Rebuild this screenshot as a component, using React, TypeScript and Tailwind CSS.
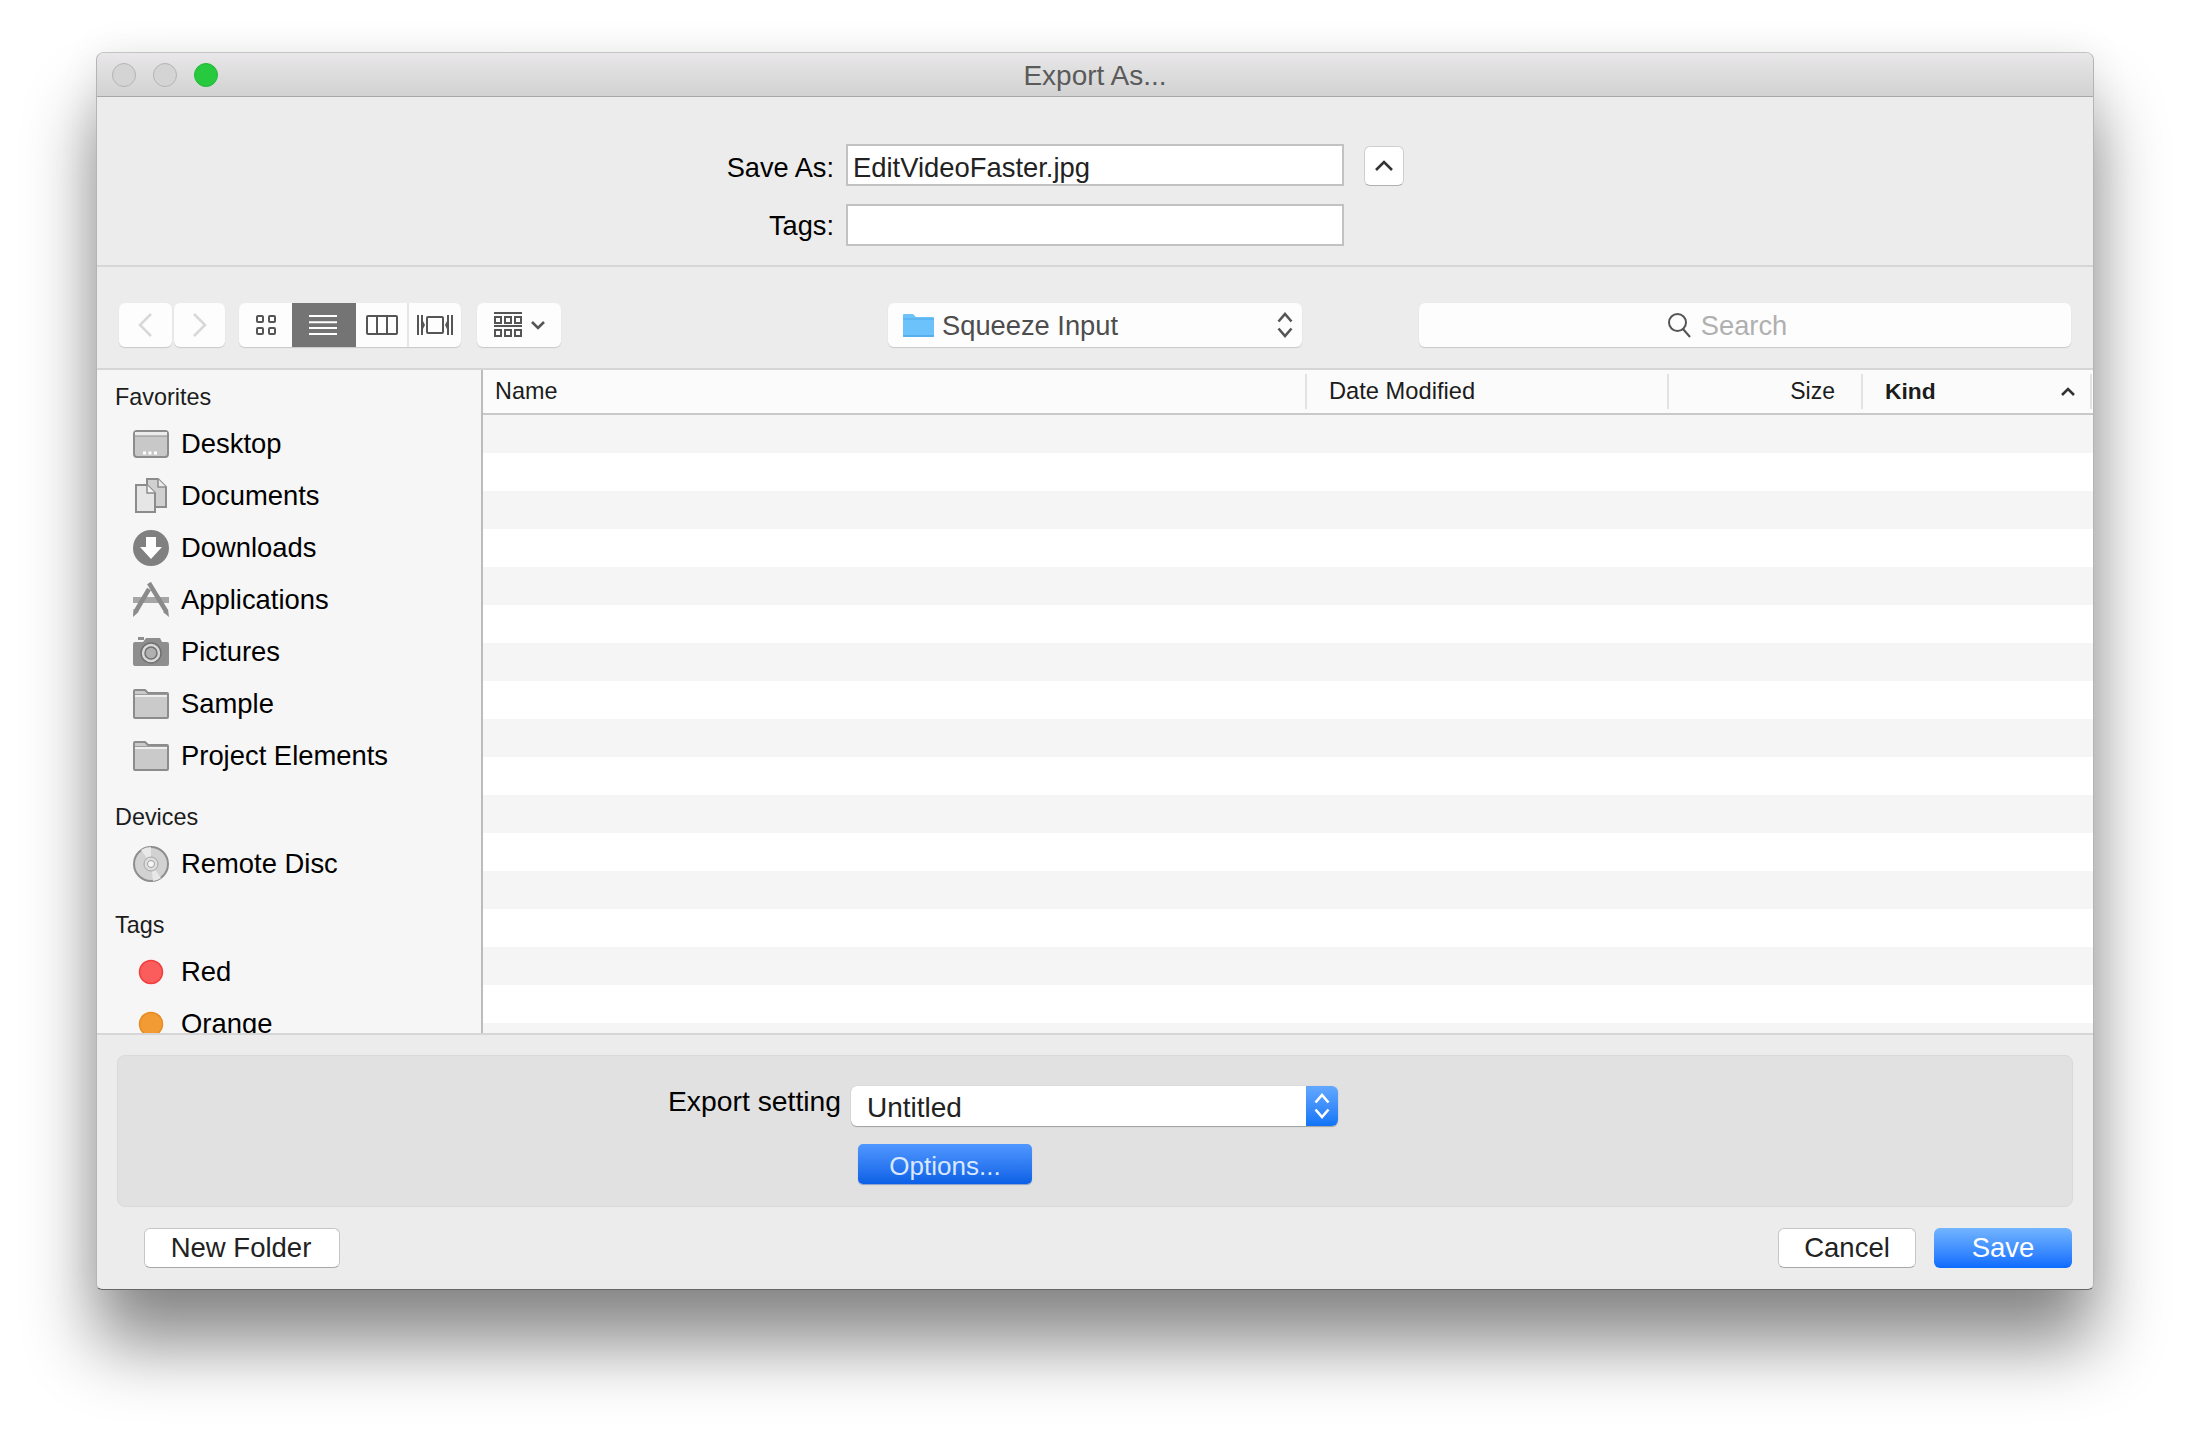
const FONT = 'font-["Liberation_Sans",Arial,sans-serif]';

function Desktop() {
  return (
    <svg width="36" height="36" viewBox="0 0 36 36">
      <rect x="1" y="5" width="34" height="26" rx="3" fill="#c8c8c8" stroke="#8c8c8c" strokeWidth="2" />
      <rect x="2" y="6" width="32" height="4" fill="#ececec" />
      <path d="M2 10h32" stroke="#8c8c8c" strokeWidth="1" />
      <path d="M10 27h3M15.500 27h3M21 27h3" stroke="#fff" strokeWidth="3" />
    </svg>
  );
}

function Documents() {
  return (
    <svg width="36" height="36" viewBox="0 0 36 36">
      <path d="M14 1h11l8 8v20H14z" fill="#d0d0d0" stroke="#8c8c8c" strokeWidth="2" />
      <path d="M25 1v8h8" fill="#ececec" stroke="#8c8c8c" strokeWidth="1.500" />
      <path d="M3 7h11l8 8v19H3z" fill="#e6e6e6" stroke="#8c8c8c" strokeWidth="2" />
      <path d="M14 7v8h8" fill="#f4f4f4" stroke="#8c8c8c" strokeWidth="1.500" />
    </svg>
  );
}

function Downloads() {
  return (
    <svg width="36" height="36" viewBox="0 0 36 36">
      <circle cx="18" cy="18" r="18" fill="#808080" />
      <path d="M13 7h10v10h6L18 29 7 17h6z" fill="#fff" />
    </svg>
  );
}

function Applications() {
  return (
    <svg width="36" height="36" viewBox="0 0 36 36">
      <path d="M0 15h36v6H0z" fill="#a6a6a6" />
      <path d="M16 7L3 29" stroke="#8a8a8a" strokeWidth="4.500" />
      <path d="M16 1l17 28" stroke="#8a8a8a" strokeWidth="4.500" />
      <path d="M0 35l0.500-8 5 3z" fill="#8a8a8a" />
      <path d="M36 35l-6-5 5-3z" fill="#8a8a8a" />
    </svg>
  );
}

function Camera() {
  return (
    <svg width="36" height="36" viewBox="0 0 36 36">
      <path d="M2 8h8l3-4h14l2 4h5a2 2 0 0 1 2 2v20a2 2 0 0 1-2 2H2a2 2 0 0 1-2-2V10a2 2 0 0 1 2-2z" fill="#8e8e8e" />
      <path d="M5 3h6v3H5z" fill="#8e8e8e" />
      <circle cx="18" cy="19" r="10" fill="#d8d8d8" stroke="#707070" strokeWidth="1.500" />
      <circle cx="18" cy="19" r="6" fill="#b0b0b0" stroke="#707070" strokeWidth="1.500" />
    </svg>
  );
}

function Folder() {
  return (
    <svg width="36" height="36" viewBox="0 0 36 36">
      <path d="M1 31V5a1 1 0 0 1 1-1h10l3 3h19a1 1 0 0 1 1 1v23a1 1 0 0 1-1 1H2a1 1 0 0 1-1-1z" fill="#cacaca" stroke="#8c8c8c" strokeWidth="2" />
      <path d="M2 10h32" stroke="#eeeeee" strokeWidth="2" />
      <path d="M2 8.500h32" stroke="#9c9c9c" strokeWidth="1" />
    </svg>
  );
}

function Disc() {
  return (
    <svg width="36" height="36" viewBox="0 0 36 36">
      <circle cx="18" cy="18" r="17" fill="#d2d2d2" stroke="#8e8e8e" strokeWidth="2" />
      <path d="M18 18L8 4a17 17 0 0 1 10-3z" fill="#e8e8e8" />
      <path d="M18 18l10 14a17 17 0 0 1-8 3z" fill="#e8e8e8" />
      <circle cx="18" cy="18" r="7" fill="#dedede" stroke="#a4a4a4" strokeWidth="1" />
      <circle cx="18" cy="18" r="3.500" fill="#f6f6f6" stroke="#a0a0a0" strokeWidth="1" />
    </svg>
  );
}

function TagDot({ fill, ring }: { fill: string; ring: string }) {
  return (
    <svg width="36" height="36" viewBox="0 0 36 36">
      <circle cx="18" cy="18" r="11.500" fill={fill} stroke={ring} strokeWidth="1.500" />
    </svg>
  );
}

function SideItem({ icon, label }: { icon: React.ReactNode; label: string }) {
  return (
    <div className="flex h-[52px] items-center pl-[36px]">
      <span className="w-[36px] h-[36px] shrink-0">{icon}</span>
      <span className="ml-[12px] text-[27.400px] text-black">{label}</span>
    </div>
  );
}

function SideHead({ label, className }: { label: string; className: string }) {
  return <div className={`h-[30px] leading-[30px] pl-[18px] text-[23.400px] text-[#1c1c1c] ${className}`}>{label}</div>;
}

const UpDown = ({ color, w = 16, h = 28 }: { color: string; w?: number; h?: number }) => (
  <svg width={w} height={h} viewBox="0 0 16 28" fill="none" stroke={color} strokeWidth="2.600">
    <path d="M1.500 10.500L8 3l6.500 7.500" />
    <path d="M1.500 17.500L8 25l6.500-7.500" />
  </svg>
);

const plainBtn = 'bg-white rounded-[6px] border border-[#c6c6c6] border-b-[#a8a8a8] text-[27.500px] text-[#222] flex items-center justify-center h-[40px]';
const toolBtn = 'bg-[#fdfdfd] rounded-[6px] shadow-[0_1px_1px_#c8c8c8] h-[44px] flex items-center justify-center';

export default function App() {
  return (
    <div className={`w-[2189px] h-[1437px] bg-white overflow-hidden pt-[52px] pl-[96px] ${FONT}`}>
      <div className="w-[1998px] h-[1238px] flex flex-col bg-[#ececec] border border-[#b4b4b4] border-t-[#c4c4c4] border-b-[#666666] rounded-t-[8px] rounded-b-[6px] overflow-hidden shadow-[0_55px_70px_rgba(0,0,0,0.46),0_0_40px_rgba(0,0,0,0.07)]">
        {/* title bar */}
        <div className="relative h-[44px] shrink-0 flex items-center justify-center bg-gradient-to-b from-[#e9e7e9] to-[#d2d2d2] border-b border-[#a6a6a6]">
          <div className="absolute left-[15px] top-[10px] flex gap-[17px]">
            <span className="w-[24px] h-[24px] rounded-full bg-[#d4d4d4] border border-[#b4b4b4]" />
            <span className="w-[24px] h-[24px] rounded-full bg-[#d4d4d4] border border-[#b4b4b4]" />
            <span className="w-[24px] h-[24px] rounded-full bg-[#27c93f] border border-[#22b838]" />
          </div>
          <span className="text-[28px] leading-[44px] pt-[2px] text-[#5a5a5a]">Export As...</span>
        </div>

        {/* save as form */}
        <div className="h-[170px] shrink-0 pt-[47px] border-b-2 border-[#d6d6d6]">
          <div className="flex h-[42px]">
            <div className="w-[737px] text-right text-[27.200px] leading-[47px] text-black">Save As:</div>
            <div className="ml-[12px] w-[498px] bg-white border-2 border-[#c2c2c2] pl-[5px] text-[27.400px] leading-[43px] text-[#222]">EditVideoFaster.jpg</div>
            <div className="ml-[20px] mt-[2px] w-[40px] h-[40px] bg-white rounded-[6px] border border-[#cfcfcf] border-b-[#b0b0b0] flex items-center justify-center">
              <svg width="18" height="12" viewBox="0 0 18 12" fill="none" stroke="#333" strokeWidth="2.600">
                <path d="M1 10l8-8 8 8" />
              </svg>
            </div>
          </div>
          <div className="flex h-[42px] mt-[18px]">
            <div className="w-[737px] text-right text-[27.200px] leading-[44px] text-black">Tags:</div>
            <div className="ml-[12px] w-[498px] bg-white border-2 border-[#c2c2c2]" />
          </div>
        </div>

        {/* toolbar */}
        <div className="h-[103px] shrink-0 pt-[36px] flex items-start border-b-2 border-[#d6d6d6]">
          <div className={`${toolBtn} ml-[22px] w-[53px]`}>
            <svg className="-ml-[2px]" width="16" height="26" viewBox="0 0 16 26" fill="none" stroke="#d8d8d8" strokeWidth="2.600">
              <path d="M14 2L3 13l11 11" />
            </svg>
          </div>
          <div className={`${toolBtn} ml-[2px] w-[51px]`}>
            <svg width="16" height="26" viewBox="0 0 16 26" fill="none" stroke="#d8d8d8" strokeWidth="2.600">
              <path d="M2 2l11 11L2 24" />
            </svg>
          </div>
          <div className={`${toolBtn} ml-[14px] w-[222px] justify-start overflow-hidden`}>
            <div className="w-[53px] h-full flex items-center justify-center">
              <svg width="22" height="22" viewBox="0 0 22 22" fill="none" stroke="#555" strokeWidth="2">
                <rect x="2" y="2" width="6" height="6" rx="1" />
                <rect x="14" y="2" width="6" height="6" rx="1" />
                <rect x="2" y="14" width="6" height="6" rx="1" />
                <rect x="14" y="14" width="6" height="6" rx="1" />
              </svg>
            </div>
            <div className="w-[64px] h-full bg-[#747474] flex items-center justify-center">
              <svg className="-ml-[2px]" width="28" height="20" viewBox="0 0 28 20" fill="none" stroke="#fff" strokeWidth="2">
                <path d="M0 1h28M0 7.300h28M0 13h28M0 19h28" />
              </svg>
            </div>
            <div className="w-[53px] h-full flex items-center justify-center border-r-2 border-[#e6e6e6]">
              <svg width="32" height="20" viewBox="0 0 32 20" fill="none" stroke="#555" strokeWidth="2">
                <rect x="1" y="1" width="30" height="18" rx="1" />
                <path d="M11 1v18M21 1v18" />
              </svg>
            </div>
            <div className="w-[52px] h-full flex items-center justify-center">
              <svg width="36" height="22" viewBox="0 0 36 22" fill="none" stroke="#555" strokeWidth="2">
                <rect x="10" y="3" width="16" height="16" rx="1" />
                <path d="M1 1v20M5 1v20M31 1v20M35 1v20" />
                <path d="M6 7l2 4-2 4zM30 7l-2 4 2 4z" fill="#555" stroke="none" />
              </svg>
            </div>
          </div>
          <div className={`${toolBtn} ml-[16px] w-[84px] gap-[9px]`}>
            <svg width="28" height="26" viewBox="0 0 28 26" fill="none" stroke="#555" strokeWidth="2">
              <path d="M0 1h28M0 14h28" />
              <rect x="1" y="5" width="6" height="6" />
              <rect x="11" y="5" width="6" height="6" />
              <rect x="21" y="5" width="6" height="6" />
              <rect x="1" y="18" width="6" height="6" />
              <rect x="11" y="18" width="6" height="6" />
              <rect x="21" y="18" width="6" height="6" />
            </svg>
            <svg width="14" height="10" viewBox="0 0 14 10" fill="none" stroke="#555" strokeWidth="2.600">
              <path d="M1 2l6 6 6-6" />
            </svg>
          </div>
          <div className={`${toolBtn} ml-[327px] w-[414px] justify-start pl-[15px]`}>
            <svg width="31" height="24" viewBox="0 0 31 24">
              <path d="M0 23V2a1 1 0 0 1 1-1h9l3 3h17a1 1 0 0 1 1 1v18a1 1 0 0 1-1 1H1a1 1 0 0 1-1-1z" fill="#6cc2fb" />
              <path d="M0 6h31" stroke="#4fa8e8" strokeWidth="1" />
              <path d="M0 23h31" stroke="#3f9ddf" strokeWidth="1" />
            </svg>
            <span className="ml-[8px] text-[27.300px] leading-[46px] pt-[2px] text-[#4d4d4d]">Squeeze Input</span>
            <span className="ml-auto mr-[9px] flex">
              <UpDown color="#555" />
            </span>
          </div>
          <div className={`${toolBtn} ml-[117px] w-[652px] pr-[36px]`}>
            <svg width="24" height="26" viewBox="0 0 24 26" fill="none" stroke="#555" strokeWidth="2">
              <circle cx="10.500" cy="10.500" r="8.500" />
              <path d="M16 17l7 8" />
            </svg>
            <span className="ml-[10px] text-[27.300px] leading-[46px] pt-[2px] text-[#b0b0b0]">Search</span>
          </div>
        </div>

        {/* sidebar and file list */}
        <div className="h-[663px] shrink-0 flex overflow-hidden">
          <div className="w-[384px] shrink-0 bg-[#f6f6f6] overflow-hidden">
            <SideHead label="Favorites" className="mt-[12px]" />
            <div className="mt-[6px]">
              <SideItem icon={<Desktop />} label="Desktop" />
              <SideItem icon={<Documents />} label="Documents" />
              <SideItem icon={<Downloads />} label="Downloads" />
              <SideItem icon={<Applications />} label="Applications" />
              <SideItem icon={<Camera />} label="Pictures" />
              <SideItem icon={<Folder />} label="Sample" />
              <SideItem icon={<Folder />} label="Project Elements" />
            </div>
            <SideHead label="Devices" className="mt-[20px]" />
            <div className="mt-[6px]">
              <SideItem icon={<Disc />} label="Remote Disc" />
            </div>
            <SideHead label="Tags" className="mt-[20px]" />
            <div className="mt-[6px]">
              <SideItem icon={<TagDot fill="#fb5c5c" ring="#f03e3e" />} label="Red" />
              <SideItem icon={<TagDot fill="#f29b35" ring="#e88a1e" />} label="Orange" />
            </div>
          </div>
          <div className="flex-1 flex flex-col border-l-2 border-[#bcbcbc] bg-white overflow-hidden">
            <div className="h-[45px] shrink-0 flex items-center bg-[#fbfbfb] border-b-2 border-[#c9c9c9] text-[23.400px] text-[#1c1c1c]">
              <div className="w-[822px] pl-[12px]">Name</div>
              <div className="w-[362px] h-[35px] leading-[35px] pl-[22px] border-l-2 border-[#e2e2e2] text-[23.700px]">Date Modified</div>
              <div className="w-[194px] h-[35px] leading-[35px] pr-[26px] text-right border-l-2 border-[#e2e2e2] text-[23px]">Size</div>
              <div className="w-[231px] h-[35px] pl-[22px] pr-[15px] flex items-center justify-between border-x-2 border-[#e2e2e2] font-bold text-[22.800px]">
                <span>Kind</span>
                <svg width="14" height="10" viewBox="0 0 14 10" fill="none" stroke="#333" strokeWidth="2.600">
                  <path d="M1 8l6-6 6 6" />
                </svg>
              </div>
            </div>
            {Array.from({ length: 17 }).map((_, i) => (
              <div key={i} className={`h-[38px] shrink-0 ${i % 2 === 0 ? 'bg-[#f5f5f5]' : 'bg-white'}`} />
            ))}
          </div>
        </div>

        {/* footer */}
        <div className="flex-1 border-t-2 border-[#d6d6d6]">
          <div className="mt-[20px] mx-[20px] h-[152px] rounded-[8px] bg-[#e1e1e1] border border-[#d9d9d9] pt-[30px]">
            <div className="flex">
              <div className="w-[723px] h-[32px] leading-[31px] text-right text-[28.300px] text-black">Export setting</div>
              <div className="ml-[10px] w-[487px] h-[40px] flex rounded-[6px] bg-white shadow-[0_1px_1px_#a0a0a0,0_0_1px_#b0b0b0] overflow-hidden">
                <div className="flex-1 pl-[16px] text-[28px] leading-[44px] text-[#222]">Untitled</div>
                <div className="w-[32px] bg-gradient-to-b from-[#62a8ff] to-[#0f74f6] flex items-center justify-center">
                  <UpDown color="#fff" />
                </div>
              </div>
            </div>
            <div className="ml-[740px] mt-[18px] w-[174px] h-[40px] rounded-[5px] bg-gradient-to-b from-[#4f97ff] to-[#0b60e6] shadow-[0_1px_1px_#8aa0c8] text-center leading-[45px] text-[26px] text-[#d8e8ff]">
              Options...
            </div>
          </div>
          <div className="mt-[21px] flex items-start">
            <div className={`${plainBtn} ml-[47px] w-[196px] pr-[2px]`}>New Folder</div>
            <div className={`${plainBtn} ml-auto w-[138px]`}>Cancel</div>
            <div className="ml-[18px] mr-[21px] w-[138px] h-[40px] rounded-[6px] bg-gradient-to-b from-[#72b4ff] to-[#0a6bff] flex items-center justify-center text-[27.500px] text-white">
              Save
            </div>
          </div>
        </div>
      </div>
    </div>
  );
}
